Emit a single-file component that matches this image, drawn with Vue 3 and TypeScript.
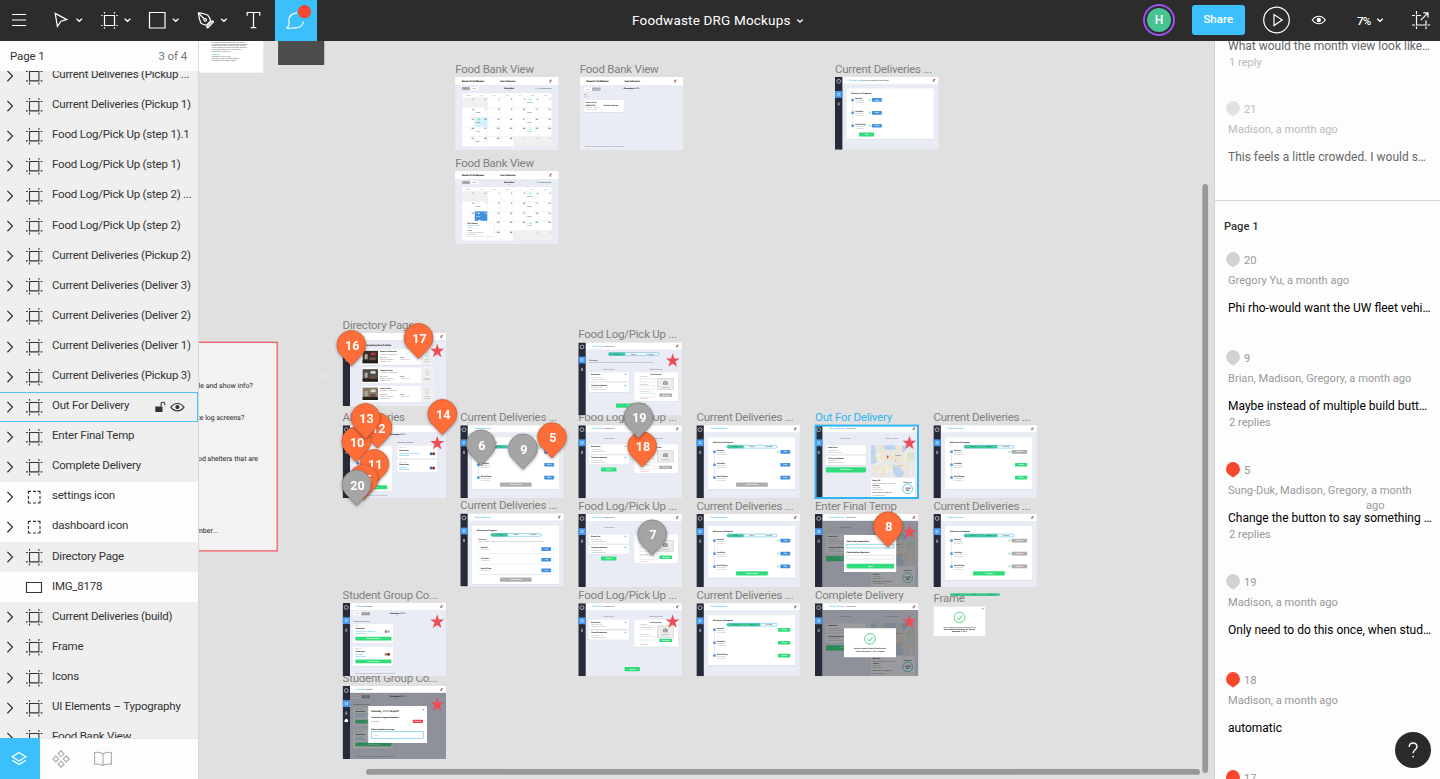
<script setup lang="ts">
type Shape =
  | { k: 'r'; x: number; y: number; w: number; h: number; f: string; rx: number; s: string; sw: number }
  | { k: 'c'; x: number; y: number; r: number; f: string; s: string; sw: number }
  | { k: 'p'; d: string; f: string; s: string; sw: number }
  | { k: 't'; x: number; y: number; z: number; t: string; f: string; b: number; a: 'start' | 'middle' | 'end' }

interface Board { label: string; x: number; y: number; w: number; h: number; shapes: Shape[]; on?: boolean }

const BLUE = '#4390e2'
const GREEN = '#31dd7b'
const GREY = '#adadad'
const LINK = '#2bb3ef'
const INK = '#1a1a1a'

const R = (x: number, y: number, w: number, h: number, f: string, rx = 0, s = 'none', sw = 0.4): Shape => ({ k: 'r', x, y, w, h, f, rx, s, sw })
const C = (x: number, y: number, r: number, f: string, s = 'none', sw = 0.4): Shape => ({ k: 'c', x, y, r, f, s, sw })
const P = (d: string, f: string, s = 'none', sw = 0.4): Shape => ({ k: 'p', d, f, s, sw })
const T = (x: number, y: number, z: number, t: string, f = INK, b = 400, a: 'start' | 'middle' | 'end' = 'start'): Shape => ({ k: 't', x, y, z, t, f, b, a })
const card = (x: number, y: number, w: number, h: number): Shape[] => [R(x + 0.1, y + 0.4, w, h, '#d5d8e2', 0.6), R(x, y, w, h, '#ffffff', 0.6)]
const btn = (x: number, y: number, w: number, h: number, f: string, t: string): Shape[] => [R(x, y, w, h, f, 0.4), T(x + w / 2, y + h / 2 + 0.65, 1.7, t, '#ffffff', 700, 'middle')]
const bell = (x: number, y: number): Shape[] => [P(`M${x - 1} ${y + 1.4}h2l-.4-2.2h-1.2z`, '#8c8c8c'), C(x + 0.9, y - 0.8, 0.8, '#ef3b41')]

function shell(a: string, b = ''): Shape[] {
  return [
    R(0, 0, 103.4, 73, '#e9ecf5'), R(0, 0, 103.4, 7, '#ffffff'), R(0, 0, 7.4, 73, '#272b39'),
    R(0, 14.2, 7.4, 6.8, '#4a9bed'),
    C(3.7, 4.5, 1.9, 'none', '#dfe3ea', 0.7),
    R(2.3, 16, 2.8, 3, '#a9d2fb'), R(3.6, 16, 0.3, 3, '#4a9bed'), R(2.3, 17.4, 2.8, 0.3, '#4a9bed'),
    R(2.7, 25.6, 2, 3, '#8f94a0'), R(3.2, 26.2, 1, 0.4, '#272b39'),
    T(11, 4.3, 2.1, '‹', '#555555'), T(14, 4.3, 2.1, a, LINK, 500), T(14.6 + a.length * 1.06, 4.3, 1.9, b, '#555555', 500),
    ...bell(98.6, 3.6),
  ]
}

function pill(x: number, y: number, steps: number): Shape[] {
  const out: Shape[] = [R(x, y, 50, 2.7, '#ffffff', 1.3, '#36aedd', 0.5)]
  if (steps) out.push(R(x, y, steps * 16.6, 2.7, '#3cc98b', 1.3, '#36aedd', 0.4))
  ;['Pick Up', 'Deliver', 'Complete'].forEach((t, i) => out.push(T(x + 8.3 + i * 16.7, y + 1.9, 1.6, t, i < steps ? '#187a50' : '#444444', 500, 'middle')))
  return out
}

const people: string[] = ['Nourish', 'FareStart', 'Bartell Drug']

function progress(steps: number, row: [string, string, boolean][], end: [string, string] | null, cardH = 51.8): Shape[] {
  const out = [...shell("Today's Deliveries"), ...card(11.7, 12, 87.3, cardH), T(16.5, 17.9, 2, 'Deliveries in Progress', INK, 900), ...pill(30.7, 20.2, steps), R(17.8, 27, 0.6, 25.5, '#c7dcf4')]
  row.forEach(([fill, label, done], i) => {
    const y = 26.6 + i * 12.9
    const w = fill === GREY ? 15.6 : fill === GREEN ? 12.2 : 9.8
    out.push(C(18.1, y, 1.5, '#5b9fe8'), T(20.6, y - 0.3, 1.9, people[i], INK, 900), T(20.6, y + 1.6, 1.3, '4001 University', '#777777'), T(20.6, y + 3.1, 1.3, '(206) 555-0142', '#888888'))
    out.push(...btn(93.8 - w, y - 1.8, w, 3.7, fill, label))
    if (done) out.push(C(93.8 - w - 2.2, y, 0.9, '#b9f2cf', '#5bd88b', 0.3))
  })
  if (end) out.push(...btn(39.7, 57.2, 31.7, 4.3, end[0], end[1]))
  return out
}

function pickupFirst(): Shape[] {
  const out = [...shell('Pick Up Log', 'Deliveries ready to be built today'), ...card(11.7, 11.7, 87, 50.6), T(16.2, 17.3, 2, 'Deliveries in Progress', INK, 900), R(17.4, 23, 0.6, 26, '#c7dcf4')]
  people.forEach((p, i) => {
    const y = 23.1 + i * 12.9
    out.push(C(17.7, y, 1.5, '#5b9fe8'), T(20.2, y - 0.4, 1.9, p, INK, 900), T(20.2, y + 1.4, 1.3, '4001 University', '#777777'), T(20.2, y + 2.9, 1.3, '(206) 555-0142', '#888888'), C(35, y, 1, '#b9f2cf', '#5bd88b', 0.3), ...btn(37, y - 1.8, 9.8, 3.7, BLUE, 'Build'))
  })
  return [...out, ...btn(24, 55.6, 15, 4, GREEN, 'Start')]
}

function pickupRows(): Shape[] {
  const out = [...shell("Today's Deliveries"), ...card(11.7, 12, 87.3, 58.7), T(16.5, 17.9, 2, 'Deliveries in Progress', INK, 900), ...pill(30.7, 20.2, 1), T(18, 26.2, 1.8, 'Directions', INK, 500), T(18, 28.3, 1.5, 'Select an agency to begin pickup and record items to be logged before starting the delivery session', '#777777')]
  people.forEach((p, i) => {
    const y = 31 + i * 10.7
    out.push(...card(18, y, 75.2, 8.8), T(20.6, y + 3.6, 1.9, p, INK, 900), T(20.6, y + 5.5, 1.4, '(206) 555-0142', '#888888'), ...btn(81, y + 2.8, 9.8, 3.7, BLUE, 'Log'))
  })
  return [...out, ...btn(39.7, 64.2, 31.7, 4.2, GREY, 'Start Deliveries')]
}

function items(x: number, y: number, w: number): Shape[] {
  return ['Brown Rice', 'Turkey Sandwiches'].flatMap((name, i) => {
    const t = y + i * 10.6
    return [...card(x, t, w, 9.3), T(x + 2, t + 2.9, 1.8, name, INK, 900), T(x + 2, t + 5.6, 1.5, 'Initial Temp: 40° F', '#666666'), T(x + 2, t + 7.5, 1.5, 'Temperature: 0:00 pm', '#666666')]
  })
}

function foodLog(dy: number, mode: number): Shape[] {
  const y = 29.8 + dy
  const out = [...shell('Pick Up Log', 'Nourish Inc')]
  if (mode === 1) out.push(...pill(30.3, 10.3, 1), T(10.7, 18.9, 1.9, 'Directions', '#444444', 700), T(10.7, 20.8, 1.5, 'Use this page to track the temperature of food items to be logged before starting deliveries below.', '#666666'))
  const hy = mode === 1 ? 27.7 : 13.7
  out.push(T(30.7, hy, 1.7, 'Delivery Items', '#555555', 400, 'middle'), T(77.7, hy, 1.7, 'Add Delivery Item', '#555555', 400, 'middle'), ...items(10.7, y, 40), T(48.5, y + 2.9, 1.6, 'Edit', LINK, 700, 'end'), T(48.5, y + 13.5, 1.6, 'Edit', LINK, 700, 'end'))
  const h = mode === 4 ? 27 : 29
  out.push(...card(56, y, 43.7, h), T(77.6, y + 3.3, 1.7, 'Add Food Item', INK, 900, 'middle'))
  const gaps = mode === 4 ? [6.2] : [6.2, 13.7, 21.2]
  gaps.forEach((g, i) => out.push(T(61.3, y + g - 0.9, 1.5, ['Item Name', 'Temperature', 'Initial Temp (F)'][i], '#777777'), R(61.7, y + g, 14.6, 3.7, '#ffffff', 0, '#cfcfcf', 0.4)))
  if (mode === 4) out.push(T(62.3, y + 8.7, 1.5, 'Turkey Sandwich', '#777777'), T(61.3, y + 15.3, 1.5, 'Initial Temp (F)', '#777777'), R(61.7, y + 16.5, 14.6, 3.7, '#ffffff', 0, '#cfcfcf', 0.4))
  out.push(R(79.3, y + 6.2, 15.6, 11.2, '#ececec', 0, '#c4c4c4', 0.5), R(84.8, y + 9.2, 4.6, 3.3, '#888888', 0.5), R(86.2, y + 8.6, 1.8, 1, '#888888'), C(87.1, y + 10.8, 1.1, '#888888', '#ececec', 0.5), T(87.1, y + 15.6, 1.4, 'Upload photo', '#777777', 400, 'middle'))
  out.push(...btn(81, y + (mode === 4 ? 19 : 21.2), 12.8, 3.3, mode > 2 ? GREEN : GREY, 'Add Item'), T(62, y + h - 1.7, 1.5, 'Cancel Item', '#ee5555'))
  if (mode === 1) out.push(...btn(37.7, 61, 30, 4.3, GREEN, 'Save Item'))
  else if (mode === 4) out.push(...btn(46.3, 63.8, 15.3, 4.3, GREEN, 'Submit'))
  else out.push(...btn(22.7, 42.4, 15.4, 4, GREEN, 'Submit'))
  return out
}

function outFor(): Shape[] {
  return [
    ...shell('Out For Delivery', 'Nourish Inc'),
    T(30.3, 13.9, 1.7, 'Delivery Items', '#555555', 400, 'middle'), T(77, 13.9, 1.7, 'Delivery Location', '#555555', 400, 'middle'),
    ...items(11, 20, 39.8), ...btn(10.9, 42, 40, 5.3, GREEN, 'Finish Delivery'),
    R(56, 20, 44, 32, '#e9e7e4'), P('M56 20h4l1 7 3 2-1 8-7 2zM68 20h12l1 4-6 1-6-1zM87 20h6l-1 5-5 2zM78 39l8 3 3 6-2 4h-6l-3-5z', '#bdd5ef'), P('M60 28l7-1 1 7-6 3zM70 40l6 1 1 6-6 1z', '#f1ede0'), P('M90 28l10-1v6l-9 2z', '#d8e6d0'),
    P('M66 20l1 14 2 18M76 24v9l8 7 6 12M56 33l22-1 22 4M84 20l-1 12 5 9 12 3M56 45l16-2 12-3', 'none', '#f5dd98', 0.6), P('M60 40l10-6M92 22l-2 15M96 40v12M62 48l10-9', 'none', '#ffffff', 0.6),
    C(72.7, 31.2, 0.9, '#d93a35'), P('M72 31.5l.7 2.2.7-2.2z', '#d93a35'), T(80, 30.6, 1.9, 'Seattle', '#555555'), C(80.8, 35, 0.6, '#e88d5a'), T(84, 41, 1.5, 'Renton', '#777777'),
    R(56, 52.6, 44, 20.4, '#ffffff'), T(57.6, 56.3, 1.9, 'Mary Hill', INK, 900), T(57.6, 58.4, 1.45, '4001 University Way NE, Seattle WA', '#555555'),
    T(57.6, 61.2, 1.8, 'Contact', INK, 700), T(57.6, 63.2, 1.5, 'John Smith', '#555555'), T(57.6, 65.1, 1.5, '(206) 555-0142', '#555555'), T(57.6, 68.3, 1.6, 'Notes: Leave in fridge room', '#333333', 500), T(57.6, 70.4, 1.5, 'on the second floor', '#555555'),
    T(92.6, 57.4, 1.8, 'Deliver by', INK, 700, 'middle'), C(92.6, 63.7, 4.9, '#ffffff', '#39c4de', 0.8), T(92.6, 63.5, 2.2, '12:00', INK, 900, 'middle'), T(92.6, 65.8, 2, 'PM', INK, 900, 'middle'),
  ]
}

const veil = R(7.4, 6.8, 96, 66.2, 'rgba(40,43,48,.47)')
const check = (x: number, y: number): Shape[] => [C(x, y, 5.3, '#ffffff', '#3fd07f', 0.9), P(`M${x - 2.4} ${y + 0.3}l1.8 1.8 3.3-4`, 'none', '#3fd07f', 1)]

function enterTemp(): Shape[] {
  return [...outFor(), veil, R(29, 21, 52.2, 37, '#ffffff', 0.6), T(31.7, 28, 2.15, 'Enter final temperature', INK, 900), R(31.8, 30.2, 47, 3.8, '#ffffff', 0, '#57b8e8', 0.6), T(31.7, 39, 2.15, 'Confirmation Signature', INK, 900), R(31.8, 41.2, 47, 3.8, '#ffffff', 0, '#c9c9c9', 0.4), ...btn(31.7, 49.8, 47.4, 4.6, GREEN, 'Submit')]
}
function complete(): Shape[] {
  return [...outFor(), veil, R(29, 25, 52, 29, '#ffffff', 0.6), ...check(55, 35.7), T(55, 46.2, 1.8, 'Delivery to North Helpline Food Bank on', INK, 700, 'middle'), T(55, 48.4, 1.7, 'Tuesday, November 7, 2017 complete!', INK, 700, 'middle')]
}
function frameCard(): Shape[] {
  return [R(0, 0, 52, 29.7, '#ffffff'), ...check(26, 11), T(26, 21.2, 1.7, 'You are signed up to make a delivery for the', INK, 500, 'middle'), T(26, 23.4, 1.8, 'North Helpline Food Bank, on Tuesday', INK, 900, 'middle'), T(26, 25.6, 1.8, 'November 7, 2017', INK, 900, 'middle'), T(48.6, 3.2, 3, '×', INK, 900)]
}

function student(): Shape[] {
  const out = [...shell('Schedule', 'Dropoff'), R(10.5, 9.2, 8.4, 3, '#ffffff', 0.5), R(18.9, 9.2, 8.4, 3, '#9b9b9b', 0.5), T(12.6, 11.4, 1.5, 'Month', '#777777'), T(21.2, 11.4, 1.5, 'Week', '#dddddd'), T(55, 10.8, 2.1, '‹  November 5-11  ›', INK, 900, 'middle'), T(55, 12.8, 1.4, '2017', '#888888', 400, 'middle'), T(10.7, 18.6, 1.8, 'Upcoming Deliveries', '#444444')]
  ;[21, 43.7].forEach((y, i) => {
    out.push(...card(10.3, y, 40, 19.4), T(12.8, y + 2.4, 1.4, i ? 'WED, 11/8' : 'TUE, 11/7', '#777777'), T(12.8, y + 5, 1.9, 'Dinnertime', INK, 900), T(12.8, y + 8, 1.7, i ? 'FareStart' : 'Nourish, Bartell, Evergreen', LINK, 500), T(12.8, y + 10, 1.7, 'North Seattle', LINK, 500), C(43.4, y + 7.6, 1.5, '#a3917f'), C(46, y + 7.6, 1.5, i ? '#7c3a35' : '#b8bfc8'), ...btn(12.8, y + 12.8, 36, 3.8, GREEN, i ? 'Edit Volunteers' : 'Assign Volunteers'))
  })
  return [...out, T(12.7, 71.2, 1.55, '*All food donations pickup times with your food collection', '#666666')]
}
function studentModal(): Shape[] {
  return [...student(), veil, C(3.7, 34.4, 1.6, '#ffffff'), R(1.9, 34.7, 3.6, 1.3, '#ffffff'), R(25.6, 20, 58.8, 37, '#ffffff', 0.6), T(28.5, 26.2, 2.55, 'Saturday, 11/11 Dropoff', INK, 900), T(80, 24.6, 3, '×', INK, 900), T(28.5, 31.5, 2.15, 'Currently assigned members', INK, 900), T(28.5, 36.3, 1.9, 'Brian Yan', '#777777'), ...btn(70.3, 33.8, 10, 3.3, '#ec3c4c', 'Remove'), T(28.5, 44, 2.1, 'Select member to assign', INK, 900), R(28.6, 45.7, 52, 6.6, '#ffffff', 0, '#57b8e8', 0.6), T(31, 49.7, 1.7, 'Name', '#999999'), T(77, 49.8, 2, '⌄', '#777777')]
}

function directory(): Shape[] {
  const out = [...shell('Directory'), T(20, 12.6, 2.4, 'Participating Host Profiles', INK, 900)]
  const tones = ['#35302a', '#474a46', '#857a69']
  ;['Bread of Life Mission', 'Angeline House', 'Jewish Family'].forEach((n, i) => {
    const y = 16.2 + i * 18.4
    out.push(...card(19.2, y, 72, 15.9), R(78.3, y, 13, 15.9, '#efefef'), R(20, y + 1.6, 15.4, 12.4, tones[i]), R(20, y + 11, 15.4, 3, '#24211d'), R(22, y + 5, 3, 5, '#b6a793'), R(28, y + 3.5, 5, 2.6, i ? '#ded9ca' : '#b73435'), R(27, y + 8, 6, 3, '#6d5043'), T(37.3, y + 3.2, 1.75, n, INK, 900), T(37.3, y + 5.3, 1.5, '97 S Main St. Seattle, WA', '#555555'), T(37.3, y + 9, 1.5, 'Mary Smith', '#444444'), T(37.3, y + 11, 1.5, 'Director of Services', '#444444'), T(37.3, y + 13, 1.5, '(206) 682-3579', '#444444'), T(57.5, y + 9, 1.6, 'Hours', '#444444', 700), T(57.5, y + 11, 1.5, '7:00am - 5pm', '#555555'))
    out.push(P(`M84.7 ${y + 8.2}l-1.5-2.6a1.8 1.8 0 1 1 3 0z`, 'none', '#aaaaaa', 0.4), T(84.7, y + 11, 1.4, 'Show on', '#888888', 400, 'middle'), T(84.7, y + 12.8, 1.4, 'map view', '#888888', 400, 'middle'))
  })
  return out
}

function allDeliveries(): Shape[] {
  const out = [...shell('Home'), T(55, 9.8, 2.1, '‹  November 5-11  ›', INK, 900, 'middle'), T(55, 12, 1.4, '2017', '#888888', 400, 'middle'), T(12, 18, 1.8, 'In Progress', '#444444'), T(54.8, 18, 1.8, 'Upcoming Deliveries', '#444444'), ...card(11.7, 20.7, 37.6, 45), C(15, 38, 1.5, '#5b9fe8'), ...btn(14, 60, 30.6, 4, GREEN, 'Start Deliveries')]
  ;[20.6, 34.8].forEach((y, i) => {
    out.push(...card(54.6, y, 40, 12.6), T(56.7, y + 2.7, 1.4, i ? 'FRI, 11/10' : 'WED, 11/8', '#777777'), T(56.7, y + 5.3, 1.9, 'Dinnertime', INK, 900), T(56.7, y + 8, 1.7, i ? 'FareStart' : 'Nourish, Bartell, Evergreen', LINK, 500), T(56.7, y + 10.1, 1.7, 'North Seattle', LINK, 500), C(88.5, y + 8, 1.5, '#3d6291'), C(91.1, y + 8, 1.5, '#7c3a35'))
  })
  return [...out, T(19, 71.2, 1.55, 'pickup times with your food collection', '#666666')]
}

function bankTop(x: number): Shape[] {
  return [R(0, 0, 103.4, 73, '#e9ecf5'), R(0, 0, 103.4, 8, '#ffffff'), T(x, 4.9, 2.3, 'Bread of Life Mission', '#000000', 900), T(x + 38, 4.9, 2.25, 'Your Deliveries', '#000000', 900), ...bell(95, 4)]
}
function calendar(open: boolean): Shape[] {
  const out = [...bankTop(6.8), R(6.8, 9.9, 8.2, 3, '#adadad', 0.4), R(15, 9.9, 8.2, 3, '#ffffff', 0.4), T(8.8, 12, 1.5, 'Month', '#777777'), T(17.4, 12, 1.5, 'Week', '#444444'), T(54, 11.5, 2.2, 'November', INK, 900, 'middle'), T(61, 11.2, 2, '›', '#777777'), T(54, 13.6, 1.4, '2017', '#888888', 400, 'middle'), T(79, 12, 1.8, '✓ 8p', GREEN, 700), T(84, 12, 1.4, 'Picked Up/Donated', '#2f6f6c', 700), R(6.8, 15.9, 89.8, 53.7, '#ffffff', 0.6, '#dde0e8', 0.3)]
  ;['MON', 'TUES', 'WED', 'THUR', 'FRI', 'SAT', 'SUN'].forEach((d, i) => out.push(T(13.2 + i * 12.83, 19, 1.5, d, '#777777', 400, 'middle')))
  for (let r = 0; r < 5; r++) {
    for (let c = 0; c < 7; c++) {
      const x = 6.8 + c * 12.83
      const y = 20.6 + r * 9.8
      const n = r * 7 + c - 1
      const off = n < 1 || n > 30
      const hot = r === 2 && c === 1
      out.push(R(x, y, 12.83, 9.8, hot ? (open ? '#3e8fdf' : '#d3f2fb') : off ? '#f0f0f1' : '#ffffff', 0, '#e6e8ed', 0.25), T(x + 11.6, y + 2.4, 1.9, String(off ? (n < 1 ? 30 + n : n - 30) : n), off ? '#999999' : hot && open ? '#ffffff' : '#111111', 900, 'end'))
      if ((c === 5 && (r === 0 || r === 3)) || hot) out.push(T(x + 0.7, y + 2.5, 2, '✓ 8p', hot && open ? '#ffffff' : GREEN, 700))
      if ((c === 1 && r > 0) || (c === 5 && r < 4)) out.push(T(x + 1.2, y + 5.4, 1.5, ['Nourish', 'Dinner', 'Lunch', 'Pizza', 'Rolls'][r], hot && open ? '#ffffff' : '#333333', 500))
    }
  }
  if (open) out.push(R(10.9, 50.6, 28.3, 15, '#d3d6de', 0.8), R(10.6, 50, 28.3, 15, '#ffffff', 0.8), P('M22.8 50.2l1.6-1.8 1.6 1.8z', '#ffffff'), T(12.4, 52.7, 1.75, 'Ref. Delivery', INK, 900), T(12.4, 55, 1.7, 'Nourish, 3 Items', LINK, 500), T(12.4, 57, 1.4, 'Chicken', '#777777'), T(12.4, 59.8, 1.6, 'Items', INK, 700), T(12.4, 61.8, 1.4, '7 Items sent to food bank', '#777777'), T(12.4, 63.5, 1.4, 'pickup times', '#777777'))
  return out
}
function weekList(): Shape[] {
  return [...bankTop(6.6), R(4, 10.5, 8.4, 3.2, '#ffffff', 0.4), R(12.4, 10.5, 8.4, 3.2, '#adadad', 0.4), T(6.2, 12.7, 1.5, 'Month', '#888888'), T(14.8, 12.7, 1.5, 'Week', '#eeeeee'), T(51.6, 12.1, 2.1, '‹  November 6-12  ›', INK, 900, 'middle'), T(51.6, 14.2, 1.4, '2017', '#888888', 400, 'middle'), T(4.2, 18.2, 1.6, 'SAT', '#777777'), T(4.2, 20.4, 1.8, '11/11', '#555555'), ...card(4, 23, 40, 12), T(6, 26.2, 1.8, 'Nourish Drop', INK, 700), T(6, 29.4, 1.7, 'BREAD RICE', INK, 900), T(6, 31.3, 1.5, '10 items · 3 boxes', '#777777'), T(6, 33.2, 1.5, 'Drop off 5:00pm', '#777777'), T(24, 29.3, 1.8, 'No Driver Chosen', INK, 900), T(5, 70.2, 1.55, '*All food donations pickup times with your food collection', '#666666')]
}

const CD = 'Current Deliveries ...'
const FL = 'Food Log/Pick Up ...'
const b = (label: string, x: number, y: number, shapes: Shape[], on = false): Board => ({ label, x, y, w: 103.4, h: 73, shapes, on })
const boards: Board[] = [
  b('Food Bank View', 455.2, 77, calendar(false)),
  b('Food Bank View', 579.8, 77, weekList()),
  b('Food Bank View', 455.2, 171, calendar(true)),
  b(CD, 835, 76.8, pickupFirst()),
  b('Directory Page', 342.6, 333, directory()),
  b('All Deliveries', 342.6, 425.2, allDeliveries()),
  b(CD, 460.3, 425.2, progress(1, [[BLUE, 'Build', false], [BLUE, 'Build', false], [BLUE, 'Build', false]], [GREY, 'Start Deliveries'])),
  b(FL, 578.3, 342.4, foodLog(0, 1)),
  b(FL, 578.3, 425.2, foodLog(-10.4, 2)),
  b(CD, 696.4, 425.2, progress(1, [[BLUE, 'Edit', true], [BLUE, 'Build', false], [BLUE, 'Build', false]], [GREY, 'Start Deliveries'])),
  b('Out For Delivery', 815, 425.2, outFor(), true),
  b(CD, 933.4, 425.2, progress(2, [[GREY, 'Delivered', true], [GREEN, 'Deliver', false], [GREEN, 'Deliver', false]], null)),
  b(CD, 460.3, 513.4, pickupRows()),
  b(FL, 578.3, 514, foodLog(-9.4, 3)),
  b(CD, 696.4, 514, progress(1, [[BLUE, 'Edit', true], [BLUE, 'Edit', true], [BLUE, 'Edit', true]], [GREEN, 'Start Deliveries'])),
  b('Enter Final Temp', 815, 514, enterTemp()),
  b(CD, 933.4, 514, progress(2, [[GREY, 'Delivered', true], [GREY, 'Delivered', true], [GREY, 'Delivered', true]], [GREEN, 'Complete'], 54)),
  b('Student Group Co...', 342.6, 603, student()),
  b(FL, 578.3, 603.2, foodLog(-13.2, 4)),
  b(CD, 696.4, 603.2, progress(2, [[GREEN, 'Deliver', false], [GREEN, 'Deliver', false], [GREEN, 'Deliver', false]], null, 49.8)),
  b('Complete Delivery', 815, 603.2, complete()),
  b('Student Group Co...', 342.6, 686, studentModal()),
  { label: 'Frame', x: 933.5, y: 606.4, w: 52, h: 29.7, shapes: frameCard() },
]

const stars: [number, number][] = [[437.2, 351], [437.2, 443.2], [672.7, 360.6], [909.4, 443], [909.6, 532], [437.2, 621.8], [437.2, 704.6], [672.6, 621.6], [909.5, 621.6]]

const pins: { n: number; x: number; y: number; grey?: boolean }[] = [
  { n: 12, x: 377.5, y: 427.5 }, { n: 10, x: 356.3, y: 441.5 }, { n: 13, x: 365.6, y: 418 }, { n: 11, x: 374.4, y: 464 }, { n: 15, x: 363.6, y: 479 }, { n: 20, x: 356.6, y: 484.6, grey: true },
  { n: 16, x: 351.4, y: 345 }, { n: 17, x: 418.6, y: 338 }, { n: 14, x: 442.4, y: 414 }, { n: 6, x: 481, y: 444.5, grey: true }, { n: 9, x: 523, y: 448.5, grey: true }, { n: 5, x: 552, y: 437.3 },
  { n: 18, x: 642.2, y: 446.3 }, { n: 19, x: 638.5, y: 417.3, grey: true }, { n: 7, x: 652.2, y: 534.4, grey: true }, { n: 8, x: 888, y: 526.3 },
]

const letter = ['Our goal with the student delivery service', 'is to reduce waste on campus and connect', 'students with local food shelters. Groups', 'collect donated items each week and then', 'track temperatures for safe delivery', 'to partners in the area.']

type Glyph = 'frame' | 'group' | 'rect'
const layers: { name: string; icon: Glyph; active?: boolean }[] = [
  { name: 'Current Deliveries (Pickup ...', icon: 'frame' },
  { name: 'Current Deliveries (Pickup 1)', icon: 'frame' },
  { name: 'Food Log/Pick Up (step 1).1', icon: 'frame' },
  { name: 'Food Log/Pick Up (step 1)', icon: 'frame' },
  { name: 'Food Log/Pick Up (step 2) ...', icon: 'frame' },
  { name: 'Food Log/Pick Up (step 2)', icon: 'frame' },
  { name: 'Current Deliveries (Pickup 2)', icon: 'frame' },
  { name: 'Current Deliveries (Deliver 3)', icon: 'frame' },
  { name: 'Current Deliveries (Deliver 2)', icon: 'frame' },
  { name: 'Current Deliveries (Deliver 1)', icon: 'frame' },
  { name: 'Current Deliveries (Pickup 3)', icon: 'frame' },
  { name: 'Out For Delivery', icon: 'frame', active: true },
  { name: 'Enter Final Temp', icon: 'frame' },
  { name: 'Complete Delivery', icon: 'frame' },
  { name: 'settings icon', icon: 'group' },
  { name: 'dashboard icon', icon: 'group' },
  { name: 'Directory Page', icon: 'frame' },
  { name: 'IMG_8178', icon: 'rect' },
  { name: 'Current Deliveries (build)', icon: 'frame' },
  { name: 'Frame', icon: 'frame' },
  { name: 'Icons', icon: 'frame' },
  { name: 'UI Elements – Typography', icon: 'frame' },
  { name: 'Food Bank View', icon: 'frame' },
]

interface Comment { n: number; who: string; wrap?: string; text: string; replies?: string; open?: boolean }
const comments: Comment[] = [
  { n: 20, who: 'Gregory Yu, a month ago', text: 'Phi rho-would want the UW fleet vehi…' },
  { n: 9, who: 'Brian, Madison, Gregory, a month ago', text: 'Maybe instead of multiple build butt…', replies: '2 replies' },
  { n: 5, who: 'Sung-Duk, Madison, Gregory, a month', wrap: 'ago', text: 'Change the button to say something …', replies: '2 replies', open: true },
  { n: 19, who: 'Madison, a month ago', text: 'Only need to do this once, when stud…' },
  { n: 18, who: 'Madison, a month ago', text: 'automatic', open: true },
  { n: 17, who: '', text: '', open: true },
]
</script>

<template>
  <div class="app">
    <header class="bar">
      <div class="tools">
        <svg class="tool" width="38" height="41" viewBox="0 0 38 41"><path d="M12 14.5h14M12 20h14M12 25.5h14" /></svg>
        <svg class="tool" width="50" height="41" viewBox="38 0 50 41"><path d="M55.2 13.4l11.6 6.2-5.8 1.6-3.6 5.2z" /><path class="chev" d="M76.500 18.700l2.800 2.600 2.800-2.600" /></svg>
        <svg class="tool" width="48" height="41" viewBox="88 0 48 41"><path d="M104.5 15.5h10v10h-10zM104.5 12v1.6M114.5 12v1.6M104.5 27.2v1.6M114.5 27.2v1.6M101.2 15.5h1.4M101.2 25.5h1.4M116.3 15.5h1.4M116.3 25.5h1.4" /><path class="chev" d="M124.7 18.7l2.8 2.6 2.8-2.6" /></svg>
        <svg class="tool" width="48" height="41" viewBox="136 0 48 41"><path d="M149.5 12.5h15.5v15.5h-15.5z" /><path class="chev" d="M172.9 18.7l2.8 2.6 2.8-2.6" /></svg>
        <svg class="tool" width="48" height="41" viewBox="184 0 48 41"><path d="M198.3 12.8c3.5.3 7 .9 9.6 2.5 1.5 1.7 2.2 3.6 2.7 5.5l-4.2 4.4c-2-.3-3.9-1-5.6-2.3-1.3-3.2-2-6.6-2.5-10.1zl6 6.200M206.600 26.800l5.700-6 1.200 1.200-5.700 6z" /><circle cx="205.2" cy="19.8" r="1.3" /><path class="chev" d="M221.1 18.7l2.8 2.6 2.8-2.6" /></svg>
        <svg class="tool" width="43" height="41" viewBox="232 0 43 41"><path d="M247.2 15.8v-3.3h12.6v3.3M253.5 12.5v15M250.7 27.7h5.6" /></svg>
        <svg class="tool active" width="42" height="41" viewBox="275 0 42 41"><path d="M297 12.8c-4.8.2-8 3.3-8.2 7.2-.1 2 .7 3.4.1 5l-1.8 3.1c3 .6 5.7-.3 7.8-.3 4.5.1 8-2.4 8.6-6.3" /><circle class="alert" cx="304.5" cy="11.6" r="6.6" /></svg>
      </div>
      <div class="title">Foodwaste DRG Mockups<svg width="8" height="6" viewBox="0 0 8 6"><path class="chev" d="M1.2 1.5l2.8 2.6 2.8-2.6" /></svg></div>
      <div class="actions">
        <div class="avatar"><span>H</span></div>
        <div class="share">Share</div>
        <svg class="tool" width="56" height="41" viewBox="1249 0 56 41"><circle cx="1277.5" cy="20" r="12.8" /><path d="M1275 14.6v11l8.2-5.5z" /></svg>
        <svg class="tool" width="30" height="41" viewBox="1305 0 30 41"><path d="M1313.3 20c3.6-5 9.4-5 13 0-3.6 5-9.4 5-13 0z" /><circle class="dot" cx="1319.8" cy="20" r="2.2" /></svg>
        <div class="zoom">7%</div>
        <svg class="tool" width="30" height="41" viewBox="1372 0 30 41"><path class="chev" d="M1378.2 18.7l2.8 2.6 2.8-2.6" /></svg>
        <svg class="tool" width="38" height="41" viewBox="1402 0 38 41"><path d="M1417.5 11v3.5M1413 15.5h3M1417.5 15.5h4.5M1417.5 15.5v9.5h9.5v-4.5M1413 25h3M1417.5 26.5v2.5M1427 26.5v2.5M1428.5 25h2.7M1421.8 20.2l7-7M1424.3 12.8h4.7v4.7" /></svg>
      </div>
    </header>

    <div class="body">
      <aside class="left">
        <div class="head"><span>Page 1</span><span class="count">3 of 4</span></div>
        <div class="list">
          <div class="rows">
            <div v-for="(l, i) in layers" :key="i" class="row" :class="{ plain: l.icon !== 'frame', active: l.active }">
              <svg class="twist" width="8" height="12" viewBox="0 0 8 12"><path v-if="l.icon !== 'rect'" d="M1.4.9l5 5.2-5 5.2" /></svg>
              <svg class="kind" width="18" height="18" viewBox="0 0 18 18">
                <path v-if="l.icon === 'frame'" d="M4.5 4.5h9.4v9.4H4.5zM4.5 1v1.8M13.9 1v1.8M4.5 15.6v1.8M13.9 15.6v1.8M1 4.5h1.8M1 13.9h1.8M15.6 4.5h1.8M15.6 13.9h1.8" />
                <path v-else-if="l.icon === 'group'" d="M3.4 6V3.4H6M8 3.4h3M12.6 3.4H15V6M15 8v3M15 12.6V15h-2.4M11 15H8M6 15H3.4v-2.4M3.4 11V8" />
                <path v-else d="M1.5 4.5h15v10h-15z" />
              </svg>
              <span class="name">{{ l.name }}</span>
              <svg v-if="l.active" class="state" width="34" height="14" viewBox="0 0 34 14">
                <path class="solid" d="M1.3 6.5h7.2V12H1.3z" /><path d="M7 6.5V4.2a1.900 1.900 0 0 1 3.800 0v1" />
                <path d="M16.8 7.2c3.6-4.9 9.6-4.9 13.2 0-3.6 4.9-9.6 4.9-13.2 0z" /><circle class="solid" cx="23.4" cy="7.1" r="2.1" />
              </svg>
            </div>
          </div>
        </div>
        <div class="tabs">
          <div class="tab active"><svg width="18" height="18" viewBox="0 0 18 18"><path d="M9 2.5l6.7 4.2L9 11 2.3 6.7zM2.3 10.3L9 14.6l6.7-4.3" /></svg></div>
          <div class="tab"><svg width="20" height="20" viewBox="0 0 20 20"><path d="M10 1.800l3 3-3 3-3-3zM10 12.200l3 3-3 3-3-3zM4.800 7l3 3-3 3-3-3zM15.200 7l3 3-3 3-3-3z" /></svg></div>
          <div class="tab"><svg width="20" height="16" viewBox="0 0 20 16"><path d="M10 3C8 1.300 4.500 1 1.600 1.500v11.700C4.500 12.700 8 13 10 14.600c2-1.600 5.500-1.900 8.400-1.400V1.500C15.500 1 12 1.300 10 3zv11.400" /></svg></div>
        </div>
      </aside>

      <main class="canvas">
        <svg class="sheet" width="1015" height="738" viewBox="199 41 1015 738">
          <rect x="199" y="41" width="64.3" height="31.6" fill="#fff" />
          <text v-for="(t, i) in letter" :key="t" x="211.5" :y="42.8 + i * 1.75" class="fine">{{ t }}</text>
          <text x="211.5" y="54.6" class="fine green">Summary</text>
          <text x="211.5" y="57.3" class="fine">Volunteers learn to log</text>
          <text x="211.5" y="59.2" class="fine">and share items with food banks</text>
          <text x="211.5" y="61.1" class="fine">throughout the Seattle region</text>
          <rect x="278.7" y="40" width="45" height="24.4" fill="#4d4d4d" stroke="#3f3f3f" />
          <rect x="190" y="342.3" width="87.2" height="208.6" fill="#f2f2f2" stroke="#f25a67" stroke-width="1.3" />
          <text x="252.8" y="388" class="note">le and show info?</text>
          <text x="244.3" y="420.3" class="note">te log screens?</text>
          <text x="258" y="460.5" class="note">od shelters that are</text>
          <text x="218" y="533.2" class="note">mber...</text>
          <circle cx="319.5" cy="359.5" r="1.5" fill="#eaeaea" /><circle cx="325" cy="376" r="1.7" fill="#eaeaea" />
          <text v-for="(o, i) in boards" :key="'l' + i" :x="o.x" :y="o.y - 4" class="label" :class="{ on: o.on }">{{ o.label }}</text>
          <g v-for="(o, i) in boards" :key="i">
            <svg class="board" :x="o.x" :y="o.y" :width="o.w" :height="o.h" :viewBox="`0 0 ${o.w} ${o.h}`">
              <template v-for="(s, j) in o.shapes" :key="j">
                <rect v-if="s.k === 'r'" :x="s.x" :y="s.y" :width="s.w" :height="s.h" :rx="s.rx" :fill="s.f" :stroke="s.s" :stroke-width="s.sw" />
                <circle v-else-if="s.k === 'c'" :cx="s.x" :cy="s.y" :r="s.r" :fill="s.f" :stroke="s.s" :stroke-width="s.sw" />
                <path v-else-if="s.k === 'p'" :d="s.d" :fill="s.f" :stroke="s.s" :stroke-width="s.sw" />
                <text v-else :x="s.x" :y="s.y" :font-size="s.z" :fill="s.f" :font-weight="s.b" :text-anchor="s.a">{{ s.t }}</text>
              </template>
            </svg>
            <rect v-if="o.on" :x="o.x + 0.6" :y="o.y + 0.4" :width="o.w - 1" :height="o.h - 0.6" fill="none" stroke="#2fb6f3" stroke-width="2" />
          </g>
          <rect x="950" y="593.2" width="50" height="2.8" rx="1.4" fill="#3cc98b" />
          <text x="954" y="595.3" font-size="1.7" fill="#18775a">Pick Up</text>
          <text x="971" y="595.3" font-size="1.7" fill="#18775a">Deliver</text>
          <text x="988" y="595.3" font-size="1.7" fill="#18775a">Complete</text>
          <path v-for="(s, i) in stars" :key="'s' + i" :transform="`translate(${s[0]} ${s[1]})`" d="M0-7.3L1.7-2.2H7L2.700 1 4.300 6.200 0 3.100-4.300 6.200-2.700 1-7-2.200h5.300z" fill="#ec4d57" />
          <g v-for="p in pins" :key="p.n" :transform="`translate(${p.x} ${p.y})`" class="pin">
            <path d="M0 20.6L-11 9A14.3 14.3 0 1 1 11 9z" :fill="p.grey ? '#a5a5a5' : '#ff6d38'" :stroke="p.grey ? '#8d8d8d' : '#d9653c'" />
            <text x="0.8" y="5">{{ p.n }}</text>
          </g>
          <rect x="1202.3" y="184" width="5.8" height="589" rx="2.9" fill="#999" />
          <rect x="366" y="769" width="834" height="5.8" rx="2.9" fill="#999" />
        </svg>
      </main>

      <aside class="right">
        <div class="feed">
          <div class="old">
            <div class="item first"><div class="text">What would the month view look like…</div><div class="replies">1 reply</div></div>
            <div class="item"><div class="id"><svg width="14" height="16" viewBox="0 0 14 16"><path d="M7 15.6L2 12A7 7 0 1 1 12 12z" /></svg>21</div><div class="who">Madison, a month ago</div><div class="text">This feels a little crowded. I would s…</div></div>
          </div>
          <div class="page">Page 1</div>
          <div v-for="c in comments" :key="c.n" class="item" :class="{ open: c.open }">
            <div class="id"><svg width="14" height="16" viewBox="0 0 14 16"><path d="M7 15.6L2 12A7 7 0 1 1 12 12z" /></svg>{{ c.n }}</div>
            <div class="who">{{ c.who }}<div v-if="c.wrap" class="wrap">{{ c.wrap }}</div></div>
            <div class="text">{{ c.text }}</div>
            <div v-if="c.replies" class="replies">{{ c.replies }}</div>
          </div>
        </div>
      </aside>
    </div>
    <div class="help"><svg width="36" height="36" viewBox="0 0 36 36"><path d="M14.2 15c0-5.200 7.800-5.200 7.800-.4 0 3.200-3.900 3.200-3.900 6.600" /><circle cx="18.1" cy="24.6" r=".9" /></svg></div>
  </div>
</template>

<style>
html, body { overflow: hidden; }
</style>

<style scoped>
.app { width: 1440px; height: 779px; overflow: hidden; position: relative; display: flex; flex-direction: column; font-family: Roboto, "Liberation Sans", sans-serif; font-size: 12px; color: #333; background: #e0e0e0; }
.bar { height: 41px; flex: none; background: #2c2c2c; display: grid; grid-template-columns: 317px 1fr 303px; color: #fff; }
.tools { display: flex; }
.tool { display: block; flex: none; fill: none; stroke: #fff; stroke-width: 1.2; }
.tool.active { background: #3cc0fd; }
.chev { fill: none; stroke: #fff; stroke-width: 1.3; }
.alert { fill: #f4472b; stroke: none; }
.dot { fill: #fff; stroke: none; }
.title { padding: 0 0 1px 315px; font-size: 13.5px; letter-spacing: .18px; white-space: nowrap; display: flex; align-items: center; }
.title svg { margin: 1px 0 0 5px; }
.actions { display: flex; align-items: center; }
.avatar { width: 28px; height: 28px; margin: 0 17px 2px 6px; border: 2.5px solid #9b51f5; border-radius: 50%; display: flex; align-items: center; justify-content: center; flex: none; }
.avatar span { width: 24px; height: 24px; border-radius: 50%; background: #46c391; font-size: 12px; font-weight: 500; line-height: 25px; text-align: center; }
.share { width: 52.5px; height: 30px; margin-bottom: 1px; border-radius: 3px; background: #3cc0fd; line-height: 29px; text-align: center; font-weight: 500; font-size: 11.5px; flex: none; }
.share + .tool { margin-left: 3.5px; }
.zoom { width: 37px; padding-left: 23px; box-sizing: border-box; font-size: 11.5px; font-weight: 500; flex: none; white-space: nowrap; letter-spacing: -.8px; }
.body { flex: 1; min-height: 0; display: flex; }
.left { width: 199px; flex: none; display: flex; flex-direction: column; background: #efefef; box-sizing: border-box; border-right: 1px solid #d8d8d8; }
.head { height: 30px; flex: none; padding: 0 11px 0 10px; display: flex; justify-content: space-between; line-height: 31px; background: #fdfdfd; font-size: 11.5px; letter-spacing: -.1px; }
.count { color: #777; }
.list { flex: 1; min-height: 0; overflow: hidden; }
.rows { margin-top: -10.4px; }
.row { height: 30.1px; box-sizing: border-box; display: flex; align-items: center; padding-left: 6px; border: 1px solid transparent; border-left: 0; }
.row.plain { background: #fdfdfd; }
.row.active { border-color: #4fc3f2; }
.twist { fill: none; stroke: #333; stroke-width: 1.3; flex: none; }
.kind { fill: none; stroke: #333; stroke-width: 1.1; margin-left: 11px; flex: none; }
.name { margin-left: 9px; font-size: 11.5px; letter-spacing: -.21px; white-space: nowrap; position: relative; top: -1.6px; }
.state { margin-left: 25px; fill: none; stroke: #333; stroke-width: 1.1; }
.solid { fill: #333; stroke: none; }
.tabs { height: 41px; flex: none; display: flex; background: #fdfdfd; border-top: 1px solid #e4e4e4; box-sizing: border-box; }
.tab { width: 42px; display: flex; align-items: center; justify-content: center; }
.tab svg { fill: none; stroke: #aaa; stroke-width: 1.1; }
.tab.active { width: 40px; margin-top: -1px; background: #3cc0fd; }
.tab.active svg { stroke: #fff; stroke-width: 1.3; margin-right: 2px; }
.canvas { width: 1015px; flex: none; overflow: hidden; }
.sheet { display: block; }
.board text { text-rendering: geometricPrecision; }
.fine { font-size: 1.9px; fill: #555; text-rendering: geometricPrecision; }
.green { fill: #2fc77b; }
.note { font-size: 7px; fill: #222; text-anchor: end; text-rendering: geometricPrecision; }
.label { font-size: 11.5px; fill: #808080; letter-spacing: -.24px; }
.label.on { fill: #2fb6f3; }
.pin { filter: drop-shadow(0 1px 1.5px rgba(0, 0, 0, .4)); }
.pin text { fill: #fff; font-size: 12.5px; font-weight: 700; text-anchor: middle; }
.right { width: 226px; flex: none; box-sizing: border-box; border-left: 1px solid #d2d2d2; background: #fdfdfd; overflow: hidden; }
.feed { margin-top: -5px; }
.old { height: 164px; border-bottom: 1px solid #d6d6d6; }
.page { height: 49px; box-sizing: border-box; padding: 16px 0 0 9px; line-height: 20px; font-weight: 500; font-size: 11.2px; }
.item { padding: 0 0 30px 13px; white-space: nowrap; }
.item.first { padding-bottom: 29px; }
.id { height: 20px; line-height: 21px; display: flex; align-items: center; color: #999; font-size: 11.2px; margin-left: -2px; }
.id svg { margin-right: 4px; fill: #d2d2d2; }
.open .id svg { fill: #f5472b; }
.who { height: 28px; padding-top: 3px; box-sizing: border-box; line-height: 15px; color: #999; font-size: 11.1px; }
.wrap { margin-left: 138px; }
.text { height: 20px; line-height: 20px; color: #000; font-size: 12px; }
.replies { height: 14px; line-height: 14px; color: #999; font-size: 11.1px; padding-left: 1px; }
.old .text { color: #666; }
.old .who, .old .id, .old .replies { color: #bbb; }
.old .id svg { fill: #e2e2e2; }
.help { position: absolute; left: 1395px; top: 732px; width: 36px; height: 36px; border-radius: 50%; background: #2a2a2a; }
.help svg { display: block; fill: none; stroke: #fff; stroke-width: 1.4; }
.help circle { fill: #fff; stroke: none; }
</style>
